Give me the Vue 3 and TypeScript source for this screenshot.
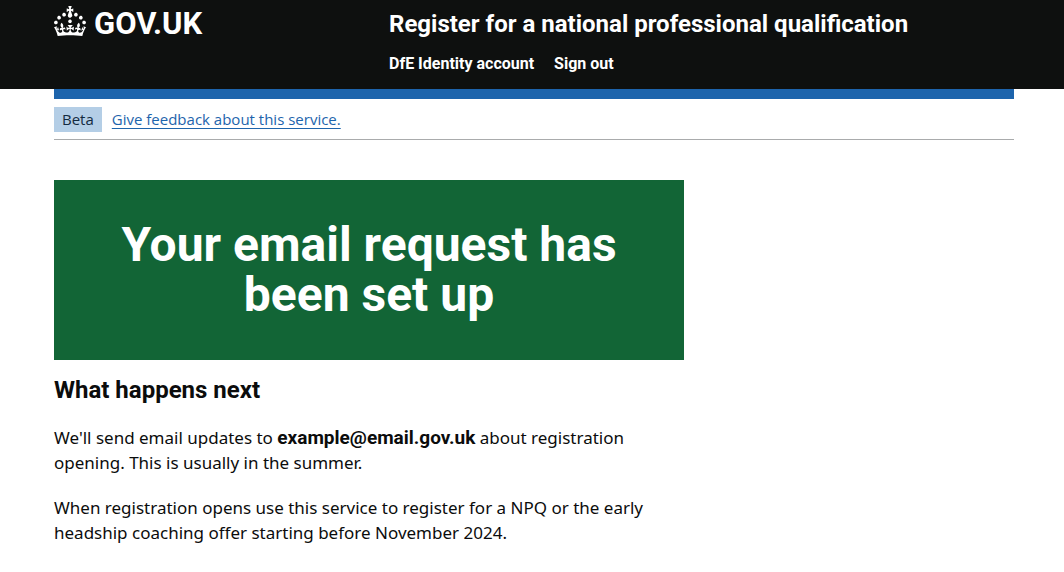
<script setup lang="ts">
interface NavItem {
  label: string
  href: string
}

const navigation: NavItem[] = [
  { label: 'DfE Identity account', href: '#account' },
  { label: 'Sign out', href: '#sign-out' },
]

const email = 'example@email.gov.uk'
</script>

<template>
  <div class="page">
    <header class="header">
      <div class="header-inner container">
        <a class="logo" href="#home" aria-label="GOV.UK">
          <svg class="crown" viewBox="0 0 32 30" width="32" height="30" aria-hidden="true">
            <path
              fill="currentColor"
              d="M22.6 10.4c-1 .4-2-.1-2.4-1-.4-.9.1-2 1-2.4.9-.4 2 .1 2.4 1s-.1 2-1 2.4m4.9 3c-1 .4-2-.1-2.4-1-.4-.9.1-2 1-2.4.9-.4 2 .1 2.4 1s0 2-1 2.4m3.3 4.8c-1 .4-2-.1-2.4-1-.4-.9.1-2 1-2.4.9-.4 2 .1 2.4 1s-.1 2-1 2.4M17 4.7l2.3 1.2V2.5l-2.3.7-.2-.2.9-3h-3.4l.9 3-.2.2c-.1.1-2.3-.7-2.3-.7v3.4L15 4.7c.1.1.1.2.2.2l-1.3 4c-.1.2-.1.4-.1.6 0 1.1.8 2 1.9 2.2h.7c1-.2 1.9-1.1 1.9-2.1 0-.2 0-.4-.1-.6l-1.3-4c-.1-.2 0-.2.1-.3m-.3 12.4c-.9.4-2-.1-2.4-1-.4-.9.1-2 1-2.4.9-.4 2 .1 2.4 1s-.1 2-1 2.4m-7.3-6.7c.9.4 2-.1 2.4-1 .4-.9-.1-2-1-2.4-.9-.4-2 .1-2.4 1s0 2 1 2.4m-5 3c.9.4 2-.1 2.4-1 .4-.9-.1-2-1-2.4-.9-.4-2 .1-2.4 1s.1 2 1 2.4m-3.2 4.8c.9.4 2-.1 2.4-1 .4-.9-.1-2-1-2.4-.9-.4-2 .1-2.4 1s0 2 1 2.4m14.8 11c4.4 0 8.6.3 12.3.8 1.1-4.5 2.4-7 3.7-8.8l-2.5-.9c.2 1.3.3 1.9 0 2.7-.4-.4-.8-1.1-1.1-2.3l-1.2 4c.7-.5 1.3-.8 2-.9-1.1 2.5-2.6 3.1-3.5 3-1.1-.2-1.7-1.2-1.5-2.1.3-1.2 1.5-1.5 2.1-.1 1.1-2.3-.8-3-2-2.3 1.9-1.9 2.1-3.5.6-5.6-2.1 1.6-2.1 3.2-1.2 5.5-1.2-1.4-3.2-.6-2.5 1.6.9-1.4 2.1-.5 1.9.8-.2 1.1-1.7 2.1-3.5 1.9-2.7-.2-2.9-2.1-2.9-3.6.7-.1 1.9.5 2.9 1.9l.4-4.3c-1.1 1.1-2.1 1.4-3.2 1.4.4-1.2 2.1-3 2.1-3h-5.4s1.7 1.9 2.1 3c-1.1 0-2.1-.2-3.2-1.4l.4 4.3c1-1.4 2.2-2 2.9-1.9-.1 1.5-.2 3.4-2.9 3.6-1.9.2-3.4-.8-3.5-1.9-.2-1.3 1-2.2 1.9-.8.7-2.3-1.2-3-2.5-1.6.9-2.2.9-3.9-1.2-5.5-1.5 2-1.3 3.7.6 5.6-1.2-.7-3.1 0-2 2.3.6-1.4 1.8-1.1 2.1.1.2.9-.3 1.9-1.5 2.1-.9.2-2.4-.5-3.5-3 .6 0 1.2.3 2 .9l-1.2-4c-.3 1.1-.7 1.9-1.1 2.3-.3-.8-.2-1.4 0-2.7l-2.9.9C1.3 23 2.6 25.5 3.7 30c3.7-.5 7.9-.8 12.3-.8"
            />
          </svg>
          <span class="wordmark">GOV.UK</span>
        </a>
        <div class="service">
          <a class="service-name" href="#service">Register for a national professional qualification</a>
          <nav aria-label="Menu">
            <ul class="nav-list">
              <li v-for="item in navigation" :key="item.label">
                <a :href="item.href">{{ item.label }}</a>
              </li>
            </ul>
          </nav>
        </div>
      </div>
    </header>

    <div class="container">
      <div class="phase-banner">
        <strong class="tag">Beta</strong>
        <a class="feedback" href="#feedback">Give feedback about this service.</a>
      </div>

      <main class="content">
        <div class="panel">
          <h1>Your email request has been set up</h1>
        </div>
        <h2>What happens next</h2>
        <p>
          We'll send email updates to <strong>{{ email }}</strong> about registration
          <br />opening. This is usually in the summer.
        </p>
        <p>
          When registration opens use this service to register for a NPQ or the early
          <br />headship coaching offer starting before November 2024.
        </p>
      </main>
    </div>
  </div>
</template>

<style>
body {
  margin: 0;
  background: #ffffff;
}
</style>

<style scoped>
.page {
  color: #0b0c0c;
  font-family: Roboto, "Noto Sans", sans-serif;
  font-size: 19px;
  line-height: 25px;
}

.container {
  max-width: 960px;
  margin: 0 50px 0 54px;
}

.header {
  background: #0e100f;
  color: #ffffff;
}

.header a {
  color: inherit;
  text-decoration: none;
}

.header-inner {
  display: grid;
  grid-template-columns: 320px 1fr;
  column-gap: 15px;
  align-items: start;
}

.logo {
  display: flex;
  align-items: flex-end;
  gap: 8px;
  padding-top: 6px;
}

.wordmark {
  font-size: 31px;
  font-weight: 700;
  line-height: 24px;
}

.service {
  padding: 9px 0 15px;
}

.service-name {
  display: block;
  font-size: 24px;
  font-weight: 700;
  line-height: 30px;
}

.nav-list {
  display: flex;
  gap: 20px;
  margin: 15px 0 0;
  padding: 0;
  list-style: none;
  font-size: 16px;
  font-weight: 700;
  line-height: 20px;
}

.phase-banner {
  display: flex;
  align-items: center;
  gap: 10px;
  border-top: 10px solid #1d64ac;
  border-bottom: 1px solid #a9abac;
  padding: 8px 0 7px;
  font-family: "Open Sans", "Noto Sans", sans-serif;
  font-size: 15px;
}

.tag {
  padding: 0 8px;
  background: #b4cee6;
  color: #132a40;
  font-weight: 400;
}

.feedback {
  color: #1d64ac;
  text-decoration: underline;
  text-decoration-thickness: 1px;
  text-underline-offset: 3px;
}

.content {
  width: calc(200% / 3 - 10px);
  padding-top: 40px;
}

.panel {
  padding: 40px;
  background: #126536;
  color: #ffffff;
  text-align: center;
}

h1 {
  margin: 0;
  font-size: 48px;
  line-height: 50px;
}

h2 {
  margin: 15px 0 20px;
  font-size: 24px;
  line-height: 30px;
}

p {
  margin: 0 0 20px;
  font-family: "Noto Sans", "Open Sans", sans-serif;
  font-size: 17px;
}

p strong {
  font-family: Roboto, "Noto Sans", sans-serif;
  font-size: 19px;
}
</style>
